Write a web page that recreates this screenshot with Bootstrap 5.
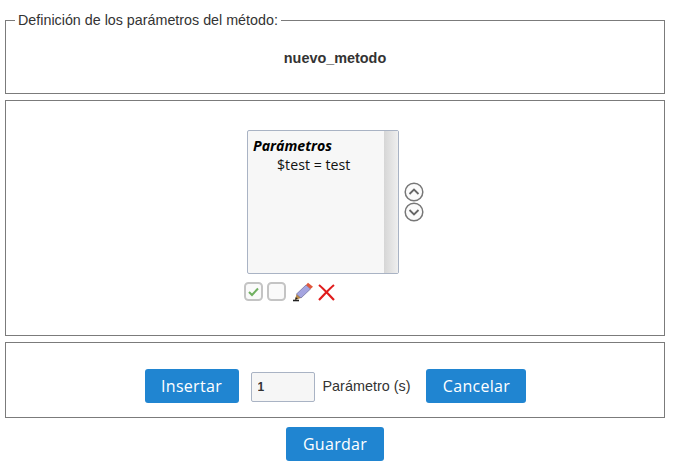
<!DOCTYPE html>
<html lang="es">
<head>
<meta charset="utf-8">
<title>Parámetros</title>
<link href="https://cdn.jsdelivr.net/npm/bootstrap@5.3.0/dist/css/bootstrap.min.css" rel="stylesheet">
<style>
html,body{height:465px;overflow:hidden}
body{background:#fff;padding:0 10px 0 5px;font-family:"Liberation Sans",Arial,sans-serif;font-size:14.4px;color:#333}
.box-def{border:1px solid #7b7b7b;margin:0;height:82px;padding:0;margin-top:12px;min-width:0}
.box-def legend{float:none;width:auto;font-size:14.3px;line-height:16px;margin:0 0 0 9px;padding:0 3px 0 3px;color:#333}
.box-name{font-weight:700;padding-top:21px;line-height:18px}
.box-plain{border:1px solid #7b7b7b}
.box-list{height:236px;margin-top:6px;padding-top:29px}
.box-act{height:76px;margin-top:6px;padding-top:26px;padding-bottom:14px;padding-left:1px}
.lst{width:152px;height:144px;background:#f7f7f7;border:1px solid #a9b3c4;border-radius:2px;font-family:"Open Sans",sans-serif;font-size:14.2px;color:#111;line-height:19px}
.lst-in{padding:5px 5px 5px 5.500px}
.lst-title{font-weight:700;font-style:italic;color:#000}
.lst-item{padding-left:24px}
.lst-bar{width:14px;background:linear-gradient(90deg,#d6d6d6,#efefef)}
.arrows{width:20px;margin-left:5px;margin-top:52px}
.arrows svg{display:block;margin-bottom:-.5px}
.tools{margin-left:-6px;margin-top:8px;height:20px;width:177px}
.tools svg{display:block}
.gap-a{margin-left:3px}.gap-b{margin-left:7px}.gap-c{margin-left:4px}
.btn-blue{background:#2085d1;border:0;border-radius:3px;color:#fff;font-family:"Open Sans",sans-serif;font-size:16px;line-height:22px;height:34px;padding:0;letter-spacing:.3px}
.btn-blue:hover{background:#1b76bb;color:#fff}
.w-ins{width:94px}.w-can{width:100px}.w-sav{width:98px}
.num{width:64px;height:30px;background:#f6f6f6;border:1px solid #a9b3c4;border-radius:2px;margin-left:12px;margin-top:2px;padding:0 6px;font-size:12px;font-weight:700;color:#333;font-family:"Liberation Sans",sans-serif}
.lbl{margin:2px 16px 0 8px;white-space:nowrap}
.save-row{margin-top:9px}
</style>
</head>
<body>
<fieldset class="box-def text-center">
<legend class="text-start">Definición de los parámetros del método:</legend>
<div class="box-name">nuevo_metodo</div>
</fieldset>
<div class="box-plain box-list">
<div class="d-flex justify-content-center">
<div class="lst d-flex flex-shrink-0">
<div class="lst-in flex-grow-1">
<div class="lst-title">Parámetros</div>
<div class="lst-item">$test = test</div>
</div>
<div class="lst-bar"></div>
</div>
<div class="arrows flex-shrink-0">
<svg width="20" height="20" viewBox="0 0 20 20"><circle cx="10" cy="10" r="8.8" fill="#fbfbfb" stroke="#777" stroke-width="1.5"/><path d="M5.5 12 10 7.5l4.500 4.500" fill="none" stroke="#666" stroke-width="1.800"/></svg>
<svg width="20" height="20" viewBox="0 0 20 20"><circle cx="10" cy="10" r="8.8" fill="#fbfbfb" stroke="#777" stroke-width="1.5"/><path d="M5.5 8 10 12.500 14.500 8" fill="none" stroke="#666" stroke-width="1.800"/></svg>
</div>
</div>
<div class="d-flex justify-content-center">
<div class="tools d-flex align-items-center">
<svg width="20" height="20" viewBox="0 0 20 20"><rect x="1" y="1" width="17" height="17" rx="3.500" fill="#fafafa" stroke="#c4c4c4" stroke-width="2"/><path d="M5 10l3 3 6-6.500" fill="none" stroke="#70b060" stroke-width="2"/></svg>
<svg class="gap-a" width="19" height="20" viewBox="0 0 19 20"><rect x="1" y="1" width="17" height="17" rx="3.500" fill="#fafafa" stroke="#c4c4c4" stroke-width="2"/></svg>
<svg class="gap-b" width="21" height="20" viewBox="0 0 21 20"><path d="M0 18.500h6" stroke="#222" stroke-width="1.600"/><path d="M2 18l1.500-6 4.500 4z" fill="#b98a48"/><path d="M2 18l.8-3 2 1.700z" fill="#222"/><path d="M3.500 12 13 3l4.500 4-9.500 9z" fill="#a5a5e0" stroke="#5a5a8a" stroke-width=".6"/><path d="M13 3l2-2.200 5 4-2.500 2.200z" fill="#e0583c"/></svg>
<svg class="gap-c" width="17" height="17" viewBox="0 0 17 17"><path d="M1 1c5 4 10 10 15 15M16 1C11 5 6 11 1 16" fill="none" stroke="#e01c1c" stroke-width="2.200"/></svg>
</div>
</div>
</div>
<div class="box-plain box-act d-flex justify-content-center align-items-center">
<button type="button" class="btn btn-blue w-ins flex-shrink-0">Insertar</button>
<input class="num flex-shrink-0" type="text" value="1">
<span class="lbl">Parámetro (s)</span>
<button type="button" class="btn btn-blue w-can flex-shrink-0">Cancelar</button>
</div>
<div class="save-row d-flex justify-content-center">
<button type="button" class="btn btn-blue w-sav">Guardar</button>
</div>
</body>
</html>
